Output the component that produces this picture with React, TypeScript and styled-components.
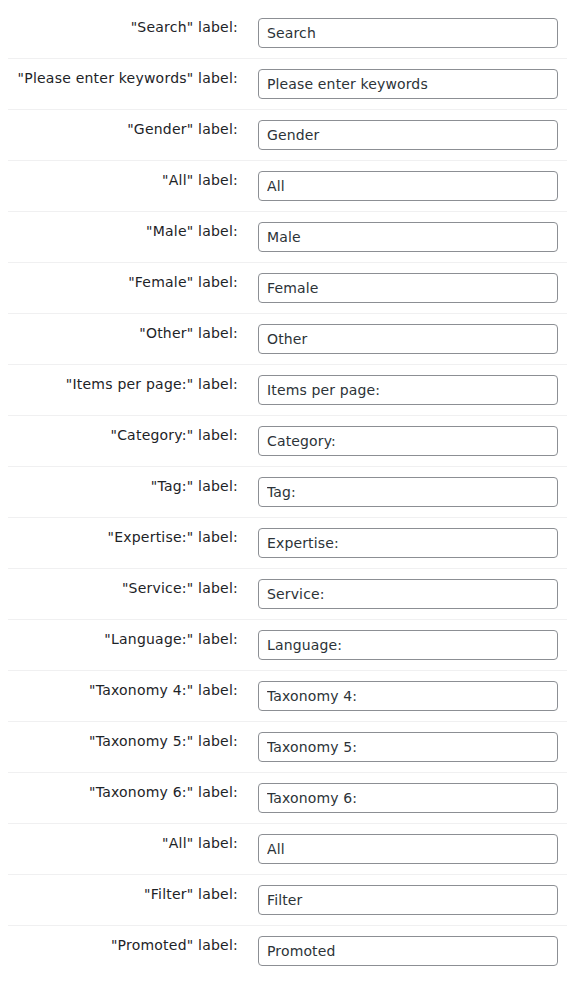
import React from "react";
import styled, { createGlobalStyle } from "styled-components";

const Global = createGlobalStyle`
  body {
    margin: 8px;
    background: #ffffff;
    font-family: "DejaVu Sans", Verdana, sans-serif;
    font-size: 14px;
    color: #2c3338;
  }
`;

const Table = styled.div`
  display: flex;
  flex-direction: column;
`;

const Row = styled.div<{ $last?: boolean }>`
  display: grid;
  grid-template-columns: 230px 300px;
  column-gap: 20px;
  align-items: start;
  padding: 10px 0 10px 8px;
  border-bottom: ${(p) => (p.$last ? "none" : "1px solid #f0f0f1")};
  margin-left: -8px;
`;

const Label = styled.label`
  text-align: right;
  line-height: 18px;
  letter-spacing: 0.22px;
  color: #1d2327;
  white-space: nowrap;
`;

const Input = styled.input`
  box-sizing: border-box;
  width: 300px;
  height: 30px;
  padding: 0 8px;
  border: 1px solid #8c8f94;
  border-radius: 4px;
  background: #fff;
  font-family: "DejaVu Sans", Verdana, sans-serif;
  font-size: 14px;
  letter-spacing: 0.14px;
  color: #2c3338;
  outline: none;
`;

const items = [
  "Search",
  "Please enter keywords",
  "Gender",
  "All",
  "Male",
  "Female",
  "Other",
  "Items per page:",
  "Category:",
  "Tag:",
  "Expertise:",
  "Service:",
  "Language:",
  "Taxonomy 4:",
  "Taxonomy 5:",
  "Taxonomy 6:",
  "All",
  "Filter",
  "Promoted",
];

export default function App() {
  return (
    <>
      <Global />
      <Table>
        {items.map((t, i) => (
          <Row key={i} $last={i === items.length - 1}>
            <Label>"{t}" label:</Label>
            <Input defaultValue={t} />
          </Row>
        ))}
      </Table>
    </>
  );
}
